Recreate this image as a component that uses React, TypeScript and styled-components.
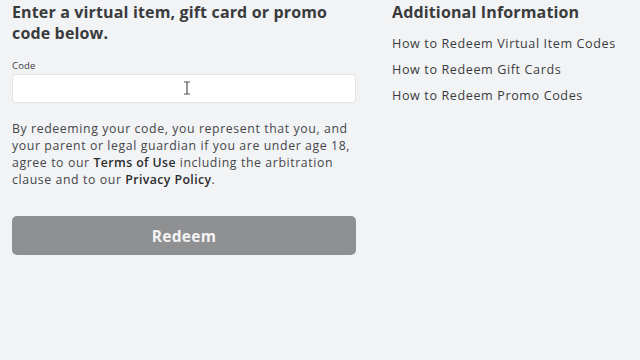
import React from "react";
import styled, { createGlobalStyle } from "styled-components";

const Global = createGlobalStyle`
	html, body {
		margin: 0;
		padding: 0;
		background: #f2f3f5;
		font-family: "Open Sans", "Liberation Sans", sans-serif;
		color: #393b3d;
	}
`;

const Page = styled.div`
	display: grid;
	grid-template-columns: 344px 248px;
	column-gap: 36px;
	padding: 2px 12px 0 12px;
	width: 640px;
	height: 360px;
	box-sizing: border-box;
	overflow: hidden;
`;

const Column = styled.div`
	display: flex;
	flex-direction: column;
`;

const Heading = styled.h2`
	margin: 0;
	font-size: 16px;
	line-height: 21px;
	font-weight: 700;
	letter-spacing: 0.15px;
`;

const Label = styled.label`
	margin-top: 16px;
	font-size: 9.5px;
	line-height: 12px;
	letter-spacing: 0.2px;
`;

const InputWrap = styled.div`
	position: relative;
	margin-top: 2px;
`;

const Input = styled.input`
	display: block;
	width: 100%;
	height: 29px;
	box-sizing: border-box;
	background: #ffffff;
	border: 1px solid #e1e3e6;
	border-radius: 4px;
	outline: none;
`;

const Cursor = styled.svg`
	position: absolute;
	left: 171px;
	top: 7px;
	pointer-events: none;
`;

const Terms = styled.p`
	margin: 17px 0 0 0;
	font-size: 12.3px;
	line-height: 17px;
	letter-spacing: 0.6px;
	color: #45474a;
`;

const Strong = styled.span`
	font-weight: 600;
	color: #2a2c2e;
	letter-spacing: 0.4px;
`;

const Button = styled.button`
	margin-top: 28px;
	height: 39px;
	border: none;
	border-radius: 5px;
	background: #8f9092;
	color: #f4f4f5;
	font-family: inherit;
	font-size: 15.5px;
	font-weight: 700;
	letter-spacing: 0.3px;
`;

const LinkList = styled.div`
	display: flex;
	flex-direction: column;
	gap: 8px;
	margin-top: 12px;
`;

const InfoLink = styled.a`
	font-size: 12.6px;
	line-height: 18px;
	color: #393b3d;
	font-weight: 500;
	letter-spacing: 0.6px;
`;

const links = [
	"How to Redeem Virtual Item Codes",
	"How to Redeem Gift Cards",
	"How to Redeem Promo Codes",
];

export default function App() {
	return (
		<>
			<Global />
			<Page>
				<Column>
					<Heading>Enter a virtual item, gift card or promo code below.</Heading>
					<Label>Code</Label>
					<InputWrap>
						<Input />
						<Cursor width="8" height="14" viewBox="0 0 8 14">
							<path d="M1 1h6M4 1v12M1 13h6" stroke="#555" strokeWidth="1.2" fill="none" />
						</Cursor>
					</InputWrap>
					<Terms>
						By redeeming your code, you represent that you, and your parent or legal guardian if you
						are under age 18, agree to our <Strong>Terms of Use</Strong> including the arbitration
						clause and to our <Strong>Privacy Policy</Strong>.
					</Terms>
					<Button>Redeem</Button>
				</Column>
				<Column>
					<Heading>Additional Information</Heading>
					<LinkList>
						{links.map((l) => (
							<InfoLink key={l}>{l}</InfoLink>
						))}
					</LinkList>
				</Column>
			</Page>
		</>
	);
}
